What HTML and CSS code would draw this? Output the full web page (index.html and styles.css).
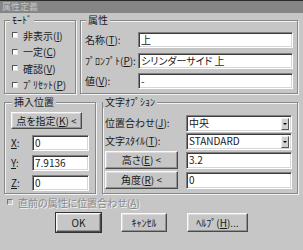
FILE: index.html
```html
<!DOCTYPE html>
<html lang="ja">
<head>
<meta charset="utf-8">
<title>属性定義</title>
<link rel="stylesheet" href="styles.css">
</head>
<body>
<div class="dialog">
  <div class="titlebar">属性定義</div>
  <div class="content">
    <div class="row row1">
      <fieldset class="group mode">
        <legend>ﾓｰﾄﾞ</legend>
        <div class="checks">
          <div class="check"><span class="box"></span>非表示(<u>I</u>)</div>
          <div class="check"><span class="box"></span>一定(<u>C</u>)</div>
          <div class="check"><span class="box"></span>確認(<u>V</u>)</div>
          <div class="check"><span class="box"></span>ﾌﾟﾘｾｯﾄ(<u>P</u>)</div>
        </div>
      </fieldset>
      <fieldset class="group attr">
        <legend>属性</legend>
        <div class="form">
          <span class="lbl">名称(<u>T</u>):</span><div class="field">上</div>
          <span class="lbl">ﾌﾟﾛﾝﾌﾟﾄ(<u>P</u>):</span><div class="field">シリンダーサイド 上</div>
          <span class="lbl">値(<u>V</u>):</span><div class="field">-</div>
        </div>
      </fieldset>
    </div>
    <div class="row row2">
      <fieldset class="group insert">
        <legend>挿入位置</legend>
        <div class="btn pick">点を指定(<u>K</u>) &lt;</div>
        <div class="coords">
          <span class="lbl"><u>X</u>:</span><div class="field">0</div>
          <span class="lbl"><u>Y</u>:</span><div class="field">7.9136</div>
          <span class="lbl"><u>Z</u>:</span><div class="field">0</div>
        </div>
      </fieldset>
      <fieldset class="group textopt">
        <legend>文字ｵﾌﾟｼｮﾝ</legend>
        <div class="tform">
          <span class="lbl">位置合わせ(<u>J</u>):</span>
          <div class="field combo"><span class="val">中央</span><span class="arrow"></span></div>
          <span class="lbl">文字ｽﾀｲﾙ(<u>T</u>):</span>
          <div class="field combo"><span class="val">STANDARD</span><span class="arrow"></span></div>
          <div class="btn">高さ(<u>E</u>) &lt;</div>
          <div class="field">3.2</div>
          <div class="btn">角度(<u>R</u>) &lt;</div>
          <div class="field">0</div>
        </div>
      </fieldset>
    </div>
    <div class="check disabled align"><span class="box"></span>直前の属性に位置合わせ(<u>A</u>)</div>
    <div class="buttons">
      <div class="btn default ok">OK</div>
      <div class="btn cancel">ｷｬﾝｾﾙ</div>
      <div class="btn help">ﾍﾙﾌﾟ(<u>H</u>)...</div>
    </div>
  </div>
</div>
</body>
</html>
```
FILE: styles.css
```css
* { box-sizing: border-box; }
html, body { margin: 0; padding: 0; }
body {
  width: 303px;
  height: 250px;
  overflow: hidden;
  background: #c6c6c6;
  color: #1a1a1a;
  font-family: "Noto Sans CJK JP", "Noto Sans", sans-serif;
  font-size: 10px;
  font-feature-settings: "palt";
}
u { text-decoration: underline; text-underline-offset: 1px; }

.dialog { height: 250px; border-top: 1px solid #2a2a2a; }
.titlebar {
  height: 12px;
  background: #858585;
  color: #c4c4c4;
  font-size: 9px;
  line-height: 12px;
  padding-left: 2px;
}
.content { padding: 1px 5px 0 4px; }

.row { display: grid; column-gap: 4px; }
.row1 { grid-template-columns: 72px 218px; height: 79px; }
.row2 { grid-template-columns: 92px 196px; column-gap: 6px; height: 98px; margin-top: 3px; }

.group {
  margin: 0;
  padding: 0;
  min-width: 0;
  border: 1px solid #878787;
  box-shadow: inset 1px 1px 0 #f2f2f2, 1px 1px 0 #f2f2f2;
}
.group legend {
  padding: 0 2px;
  margin-left: 5px;
  height: 12px;
  line-height: 12px;
  background: #c6c6c6;
}
.row2 .insert legend { margin-left: 1px; }
.row2 .textopt legend { margin-left: 0; }

/* mode checkboxes */
.checks { display: flex; flex-direction: column; padding: 1px 0 0 7px; }
.check { display: flex; align-items: center; height: 16.5px; white-space: nowrap; }
.box {
  width: 6px;
  height: 6px;
  margin-right: 5px;
  background: #fff;
  border: 1px solid;
  border-color: #555 #e6e6e6 #e6e6e6 #555;
  flex: none;
}

/* attribute form */
.form {
  display: grid;
  grid-template-columns: 53px 1fr;
  grid-auto-rows: 16px;
  row-gap: 4.5px;
  padding: 6px 4px 0 4px;
  align-items: center;
}
.lbl { white-space: nowrap; line-height: 12px; }

.field {
  height: 16px;
  background: #fff;
  border: 1px solid;
  border-color: #808080 #fff #fff #808080;
  box-shadow: inset 1px 1px 0 #3c3c3c, inset -1px -1px 0 #d6d6d6;
  padding: 1px 0 0 2px;
  line-height: 12px;
  white-space: nowrap;
  overflow: hidden;
}

/* insert position */
.insert { padding: 4px 0 0 6px; }
.btn {
  display: flex;
  align-items: center;
  justify-content: center;
  white-space: nowrap;
  background: #c6c6c6;
  border: 1px solid;
  border-color: #fafafa #4a4a4a #4a4a4a #fafafa;
  box-shadow: inset -1px -1px 0 #929292, inset 1px 1px 0 #dcdcdc;
  line-height: 12px;
}
.pick { width: 71px; height: 17px; }
.coords {
  display: grid;
  grid-template-columns: 21px 57px;
  grid-auto-rows: 16px;
  row-gap: 4px;
  margin-top: 6px;
  align-items: center;
}

/* text options */
.tform {
  display: grid;
  grid-template-columns: 73px 1fr;
  grid-template-rows: 16px 16px 18px 18px;
  column-gap: 8px;
  row-gap: 2px;
  padding: 7px 5px 0 2px;
  align-items: center;
}
.tform .btn { height: 18px; }
.tform .field { height: 17px; }
.combo { display: flex; align-items: stretch; padding-right: 2px; }
.combo .val { flex: 1; }
.arrow {
  width: 8px;
  margin: 1px 0 1px;
  display: flex;
  align-items: center;
  justify-content: center;
  background: #d0d0d0;
  border: 1px solid;
  border-color: #f2f2f2 #555 #555 #f2f2f2;
}
.arrow::after {
  content: "";
  border-left: 2px solid transparent;
  border-right: 2px solid transparent;
  border-top: 2px solid #000;
}

/* bottom */
.align { height: 12px; margin: 2px 0 0 3px; }
.disabled { color: #8a8a8a; text-shadow: 1px 1px 0 #f4f4f4; }
.disabled .box { background: #c6c6c6; border-color: #777 #eee #eee #777; }

.buttons {
  display: flex;
  justify-content: center;
  gap: 20px;
  margin-top: 5px;
  padding-left: 2px;
}
.buttons .btn { height: 19px; }
.ok { width: 45px; }
.cancel { width: 46px; }
.help { width: 61px; }
.default { outline: 1px solid #333; outline-offset: 0; }
```
